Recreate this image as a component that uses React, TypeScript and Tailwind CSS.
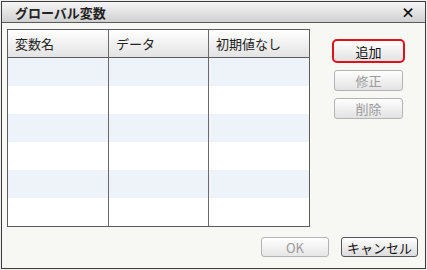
import React from 'react';

const font = { fontFamily: '"Noto Sans CJK JP", "Liberation Sans", sans-serif' };

const columns = ['変数名', 'データ', '初期値なし'];
const rows = [0, 1, 2, 3, 4, 5];

const SideButton: React.FC<{ label: string; disabled?: boolean }> = ({ label, disabled }) => (
  <button
    className={`w-[69px] h-[21px] rounded-[3px] border text-[13px] leading-none bg-gradient-to-b from-white to-[#e2e2e2] ${
      disabled ? 'border-[#b4b4b4] text-[#9a9a9a]' : 'border-[#707070] text-[#111]'
    }`}
  >
    {label}
  </button>
);

export default function App() {
  return (
    <div className="w-[427px] h-[270px] bg-[#eeeeee] pt-px pl-px" style={font}>
      <div className="w-[425px] h-[268px] border border-[#3c3c3c] bg-[#f7f8f4] flex flex-col">
        {/* Title bar */}
        <div className="h-[21px] border-b border-[#5a5a5a] bg-gradient-to-b from-[#f6f6f6] to-[#d0d0d0] flex items-center justify-between pl-[13px] pr-[10px]">
          <span className="text-[13px] font-bold text-[#222] leading-none">グローバル変数</span>
          <span className="text-[14px] font-black text-[#111] leading-none">×</span>
        </div>

        {/* Body */}
        <div className="flex-1 flex flex-col pt-[6px] pl-[5px] pr-[7px]">
          <div className="flex">
            {/* Table */}
            <div className="w-[303px] h-[198px] border border-[#5c5c5c] bg-white flex flex-col">
              <div className="h-[28px] border-b border-[#5c5c5c] bg-gradient-to-b from-white to-[#e3e3e3] grid grid-cols-[100px_100px_100px]">
                {columns.map((c, i) => (
                  <div
                    key={c}
                    className={`flex items-center pl-[7px] text-[13px] text-[#222] leading-none ${i > 0 ? 'border-l border-[#6a6a6a]' : ''}`}
                  >
                    {c}
                  </div>
                ))}
              </div>
              {rows.map((r) => (
                <div
                  key={r}
                  className={`h-[28px] grid grid-cols-[100px_100px_100px] ${r % 2 === 0 ? 'bg-[#eef3fa]' : 'bg-white'}`}
                >
                  <div />
                  <div className="border-l border-[#6a6a6a]" />
                  <div className="border-l border-[#6a6a6a]" />
                </div>
              ))}
            </div>

            {/* Side buttons */}
            <div className="ml-[22px] pt-[10px] flex flex-col items-center gap-[7px]">
              <div className="w-[73px] h-[24px] rounded-[5px] border-2 border-[#e0101a] bg-gradient-to-b from-white to-[#e2e2e2] flex items-center justify-center text-[13px] text-[#111] leading-none">
                追加
              </div>
              <SideButton label="修正" disabled />
              <SideButton label="削除" disabled />
            </div>
          </div>

          {/* Footer buttons */}
          <div className="mt-[10px] flex justify-end gap-[12px]">
            <button className="w-[68px] h-[20px] rounded-[3px] border border-[#b4b4b4] bg-gradient-to-b from-white to-[#e6e6e6] text-[13px] text-[#9a9a9a] leading-none">
              OK
            </button>
            <button className="w-[77px] h-[20px] rounded-[3px] border border-[#555] bg-gradient-to-b from-white to-[#dcdcdc] text-[13px] text-[#111] leading-none">
              キャンセル
            </button>
          </div>
        </div>
      </div>
    </div>
  );
}
